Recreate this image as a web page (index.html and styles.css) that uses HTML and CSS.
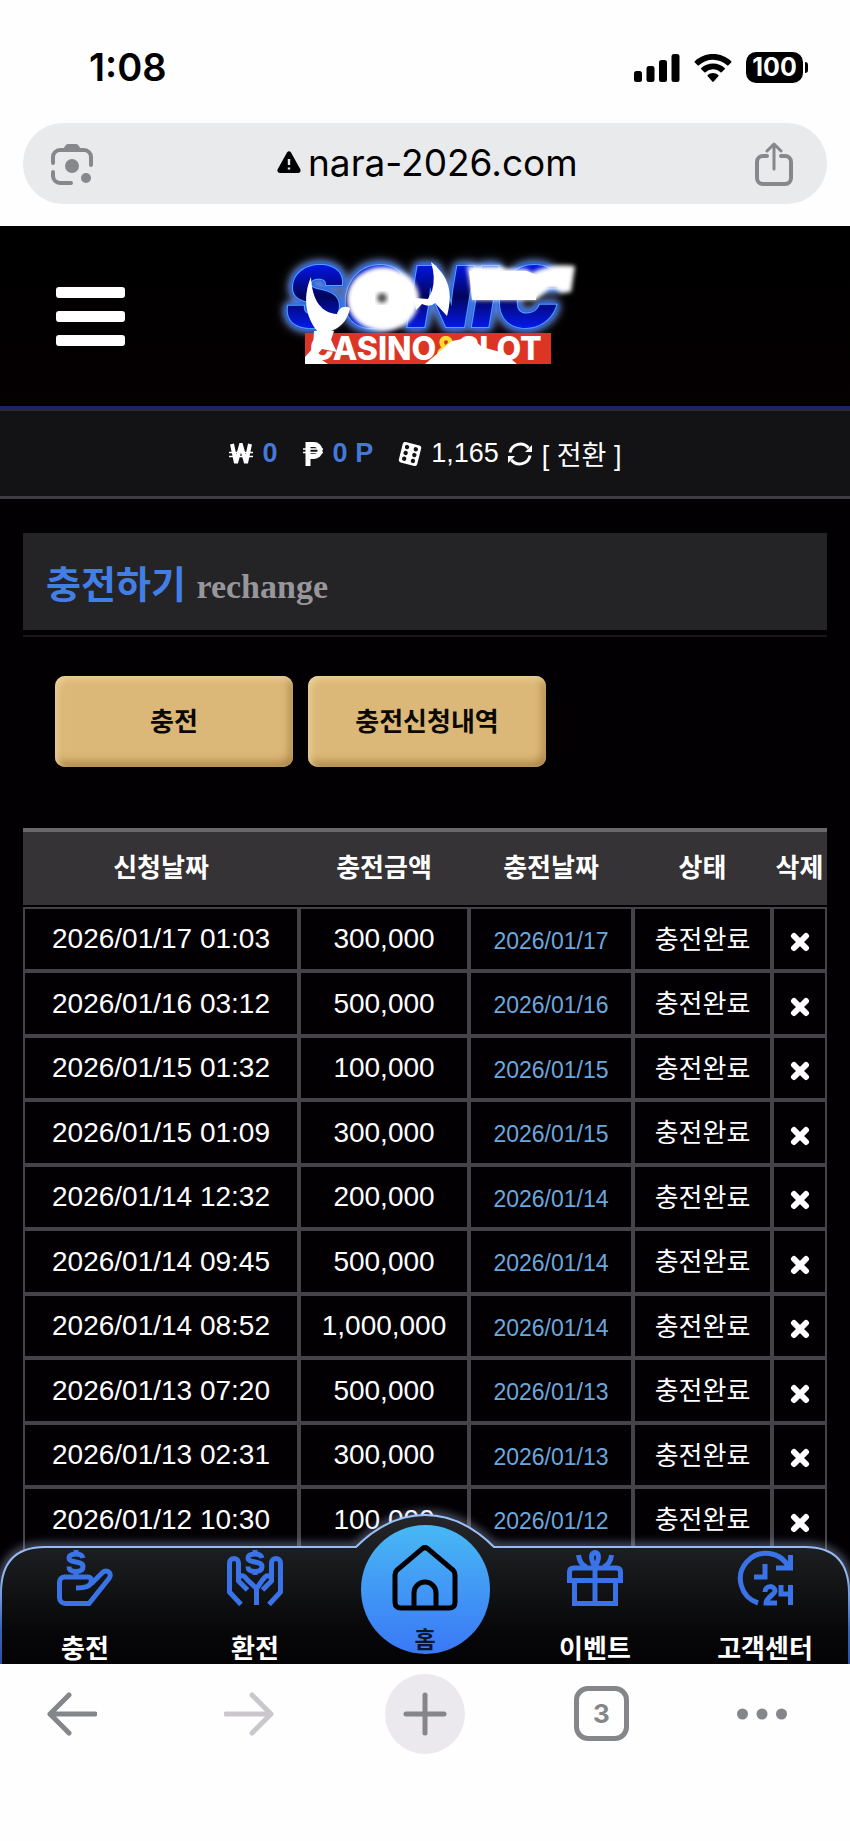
FILE: index.html
```html
<!DOCTYPE html>
<html lang="ko">

<head>
    <meta charset="UTF-8">
    <meta name="viewport" content="width=device-width, initial-scale=1.0">
    <title>충전하기</title>
    <link rel="stylesheet" href="styles.css">
</head>

<body>

    <!-- Phone status bar -->
    <div class="status-bar">
        <span class="clock">1:08</span>
        <div class="status-icons">
            <svg width="46" height="30" viewBox="0 0 46 30">
                <rect x="0" y="18" width="8" height="11" rx="2.5"/>
                <rect x="12.5" y="13" width="8" height="16" rx="2.5"/>
                <rect x="25" y="7" width="8" height="22" rx="2.5"/>
                <rect x="37.5" y="1" width="8" height="28" rx="2.5"/>
            </svg>
            <svg width="38" height="30" viewBox="0 0 38 30">
                <path d="M19 1C12 1 5.500 3.700.800 8.200a.9.9 0 0 0 0 1.300l2.800 2.800a.9.9 0 0 0 1.300 0A20.500 20.500 0 0 1 19 6.700c5.500 0 10.300 2.100 14.100 5.600a.9.9 0 0 0 1.300 0l2.800-2.800a.9.9 0 0 0 0-1.300C32.500 3.700 26 1 19 1z"/>
                <path d="M19 10.500c-4.500 0-8.600 1.700-11.700 4.500a.9.9 0 0 0 0 1.300l3 3a.9.9 0 0 0 1.200 0A11.300 11.300 0 0 1 19 16.300c2.900 0 5.500 1.100 7.500 3a.9.9 0 0 0 1.200 0l3-3a.9.9 0 0 0 0-1.300c-3.100-2.800-7.200-4.500-11.700-4.500z"/>
                <path d="M19 20c-2.100 0-4 .8-5.300 2a.9.9 0 0 0 0 1.300l4.600 5.200c.4.500 1 .5 1.400 0l4.600-5.200a.9.9 0 0 0 0-1.300A7.900 7.900 0 0 0 19 20z"/>
            </svg>
            <span class="battery">100</span>
        </div>
    </div>

    <!-- Address bar -->
    <div class="address-bar">
        <button class="bar-button" aria-label="Search by image">
            <svg width="44" height="44" viewBox="0 0 44 44" fill="none" stroke="#87888b" stroke-width="4" stroke-linecap="round">
                <path d="M3 21v-6a7 7 0 0 1 7-7h24a7 7 0 0 1 7 7v8M3 30v4a7 7 0 0 0 7 7h11"/>
                <path d="M13 8l2-4q1-2 3-2h8q2 0 3 2l2 4z" fill="#87888b" stroke="none"/>
                <circle cx="22" cy="24" r="7" fill="#87888b" stroke="none"/>
                <circle cx="36" cy="36" r="5" fill="#87888b" stroke="none"/>
            </svg>
        </button>
        <div class="address">
            <svg width="24" height="22" viewBox="0 0 24 22">
                <path d="M10 1.400q2-2.400 4 0l9.300 16.800q1.200 3.300-2 3.800H2.700q-3.200-.5-2-3.800z"/>
                <path d="M12 8v6M12 16.500v2" stroke="#e9eaec" stroke-width="2.400"/>
            </svg>
            <input class="address-input" type="text" value="nara-2026.com" aria-label="Address">
        </div>
        <button class="bar-button" aria-label="Share">
            <svg width="38" height="44" viewBox="0 0 38 44" fill="none" stroke="#87888b" stroke-width="4" stroke-linecap="round" stroke-linejoin="round">
                <path d="M12 14H8a6 6 0 0 0-6 6v16a6 6 0 0 0 6 6h22a6 6 0 0 0 6-6V20a6 6 0 0 0-6-6h-4"/>
                <path d="M19 27V3M12 9l7-7 7 7" stroke-width="3"/>
            </svg>
        </button>
    </div>

    <div class="site">

        <div class="header">
            <button class="menu" aria-label="메뉴">
                <span class="menu-line"></span>
                <span class="menu-line"></span>
                <span class="menu-line"></span>
            </button>
            <a class="logo" href="#" aria-label="Sonic Casino &amp; Slot">
                <svg width="340" height="140" viewBox="0 0 340 140">
                    <defs>
                        <filter id="soft" x="-20%" y="-20%" width="140%" height="140%">
                            <feGaussianBlur stdDeviation="2"/>
                        </filter>
                        <linearGradient id="letters" x1="0" y1="0" x2="0" y2="1">
                            <stop offset=".2" stop-color="#0314e0"/>
                            <stop offset=".5" stop-color="#02055c"/>
                            <stop offset=".8" stop-color="#0418e8"/>
                        </linearGradient>
                    </defs>
                    <text class="logo-name" x="26" y="86">SONIC</text>
                    <path d="M45 92h246v31H45z" fill="#dd3524"/>
                    <text class="logo-sub" x="50" y="119">CASINO<tspan fill="#ffdd35">&amp;</tspan>SLOT</text>
                    <!-- white shapes over the letters -->
                    <g fill="#fff">
                        <ellipse cx="123" cy="58" rx="36" ry="32" filter="url(#soft)"/>
                        <path d="M207 25h34l5 3h20l6 4q18-10 43-7l-4 26-10 1q-6-6-13-3l-12 10h-63z" filter="url(#soft)"/>
                        <path d="M209 30h58l12 5-3 24h-64z"/>
                        <path d="M51 36c-9 21-5 42 8 56 16 0 28-9 31-25-6-3-11 0-13 6-16-1-25-14-26-37z"/>
                        <path d="M171 21c14 11 24 26 16 54l-12-13q-5 5-13 1l-6 6-2-12 14 1 4-8q4-13-1-29z"/>
                        <path d="M54 90l20 0-3 9 6 12-15-3-6 7 12 8H45v-7l8-9z"/>
                        <path d="M165 123l27-23 10-2 11 0 9 8 22 6 13 11z"/>
                    </g>
                    <ellipse cx="122" cy="57" rx="5" ry="5" fill="#555" filter="url(#soft)"/>
                </svg>
            </a>
        </div>

        <!-- Balance and points -->
        <div class="wallet">
            <svg class="won" width="24" height="22" viewBox="0 0 24 22" fill="none" stroke="#fff">
                <path d="M3 1l4 19 5-18 5 18 4-19" stroke-width="4"/>
                <path d="M0 9.500h24M0 13.500h24" stroke-width="1.500"/>
            </svg>
            <b class="amount">0</b>
            <svg class="point" width="20" height="24" viewBox="0 0 20 24" fill="none" stroke="#fff">
                <path d="M5 24V2.500h6a5.500 5.500 0 0 1 0 12H5" stroke-width="5"/>
                <path d="M0 7h20M0 10.500h20" stroke-width="1.500"/>
            </svg>
            <b class="amount">0 P</b>
            <svg class="dice" width="24" height="24" viewBox="0 0 24 24">
                <g transform="rotate(14 12 12)">
                    <rect x="2.500" y="1.500" width="19" height="21" rx="2.500" fill="#fff"/>
                    <g fill="#131214">
                        <circle cx="7.500" cy="6" r="2.200"/><circle cx="7.500" cy="12" r="2.200"/><circle cx="7.500" cy="18" r="2.200"/>
                        <circle cx="16.500" cy="6" r="2.200"/><circle cx="16.500" cy="12" r="2.200"/><circle cx="16.500" cy="18" r="2.200"/>
                    </g>
                </g>
            </svg>
            <span class="chips">1,165</span>
            <svg class="refresh" width="24" height="24" viewBox="0 0 24 24" fill="none" stroke="#fff" stroke-width="3">
                <path d="M2 10.500A10.500 10.500 0 0 1 20.500 6M22 13.500A10.500 10.500 0 0 1 3.500 18"/>
                <path d="M24 3v7h-7zM0 21v-7h7z" fill="#fff" stroke="none"/>
            </svg>
            <button class="convert">[ 전환 ]</button>
        </div>

        <div class="content">
            <div class="title-wrap">
                <h1 class="title">충전하기 <small>rechange</small></h1>
            </div>

            <div class="tabs">
                <button class="tab">충전</button>
                <button class="tab">충전신청내역</button>
            </div>

            <table class="history">
                <colgroup>
                    <col>
                    <col class="col-amount">
                    <col class="col-date">
                    <col class="col-state">
                    <col class="col-delete">
                </colgroup>
                <thead>
                    <tr>
                        <th>신청날짜</th>
                        <th>충전금액</th>
                        <th>충전날짜</th>
                        <th>상태</th>
                        <th>삭제</th>
                    </tr>
                </thead>
                <tbody id="rows"></tbody>
            </table>
        </div>

        <!-- Bottom menu -->
        <div class="nav">
            <svg class="nav-shape" viewBox="0 0 850 158" preserveAspectRatio="none">
                <defs>
                    <linearGradient id="navFill" x1="0" y1="0" x2="0" y2="1">
                        <stop offset="0" stop-color="#25262a"/>
                        <stop offset=".35" stop-color="#17181a"/>
                        <stop offset=".75" stop-color="#060608"/>
                        <stop offset="1" stop-color="#020003"/>
                    </linearGradient>
                    <linearGradient id="navLine" x1="0" y1="0" x2="0" y2="1">
                        <stop offset="0" stop-color="#9cc4fa"/>
                        <stop offset=".4" stop-color="#8eb3ee"/>
                        <stop offset=".7" stop-color="#3a66b4"/>
                        <stop offset="1" stop-color="#2448a0"/>
                    </linearGradient>
                    <filter id="navGlow" x="-5%" y="-20%" width="110%" height="140%">
                        <feGaussianBlur stdDeviation="5"/>
                    </filter>
                </defs>
                <path d="M1 170V87Q1 41 45 41H356Q388 9 425 9T494 41H805Q849 41 849 87V170" fill="none" stroke="#b4c4ee" stroke-width="6" opacity=".6" filter="url(#navGlow)"/>
                <path d="M1 170V87Q1 41 45 41H356Q388 9 425 9T494 41H805Q849 41 849 87V170" fill="url(#navFill)" stroke="url(#navLine)" stroke-width="2"/>
            </svg>
            <a class="nav-item" href="#">
                <svg width="56" height="56" viewBox="0 0 56 56" class="nav-icon">
                    <path d="M20 27H7.500a5 5 0 0 0-5 5V47.500a6 6 0 0 0 6 6H32l20-25c4-5-2-10-6.500-6L34 34M7 27h24c5 0 4 8-1 9.500q-4 1.500-11 1.500"/>
                    <path d="M26 8q-1-4-7-4-7 0-7 4c0 5.500 14 2.500 14 8.500 0 4-3 5-7 5-5 0-7-1.500-7-5M19 0v4M19 21v5"/>
                </svg>
                <span class="nav-label">충전</span>
            </a>
            <a class="nav-item" href="#">
                <svg width="56" height="56" viewBox="0 0 56 56" class="nav-icon">
                    <path d="M14 54.500L2.500 42V13c0-6 9-6 9 0v18l9 9M12 27c4-3 6 0 8.500 3l9 8.500V55M42 54.500L53.500 42V13c0-6-9-6-9 0v18l-9 9M44 27c-4-3-6 0-8.500 3l-6 8.500"/>
                    <path d="M35 8q-1-4-7-4-7 0-7 4c0 5.500 14 2.500 14 8.500 0 4-3 5-7 5-5 0-7-1.500-7-5M28 0v4M28 21v4"/>
                </svg>
                <span class="nav-label">환전</span>
            </a>
            <a class="nav-item nav-home" href="#">
                <svg width="66" height="66" viewBox="0 0 66 66" class="home-icon">
                    <path d="M30 4q3-3 6 0l25 21q2 2 2 5v27q0 6-6 6H9q-6 0-6-6V30q0-3 2-5z"/>
                    <path d="M22 63V48a11 11 0 0 1 22 0v15"/>
                </svg>
                <span class="nav-label">홈</span>
            </a>
            <a class="nav-item" href="#">
                <svg width="56" height="56" viewBox="0 0 56 56" class="nav-icon">
                    <path d="M7.500 31v22.500h41V31M2.500 30.500V22q0-4 4-4h43q4 0 4 4v8.500zM28 18v36"/>
                    <path d="M28 17q-7-13 0-14.500 7 1.500 0 14.500M11.500 5q1 9 8 12M44.500 5q-1 9-8 12"/>
                </svg>
                <span class="nav-label">이벤트</span>
            </a>
            <a class="nav-item" href="#">
                <svg width="56" height="56" viewBox="0 0 56 56" class="nav-icon">
                    <path d="M21 53A25.500 25.500 0 1 1 52 18M53.500 5v13H39M28 14v13H17"/>
                    <path d="M28 42c0-7 10-7 10-1 0 3-9 7-9 12h11M44 35v9h9M53.500 35v20"/>
                </svg>
                <span class="nav-label">고객센터</span>
            </a>
        </div>
    </div>

    <!-- Browser toolbar -->
    <div class="toolbar">
        <button class="tool" aria-label="Back">
            <svg width="50" height="44" viewBox="0 0 50 44"><path d="M48 22H3M22 3L3 22l19 19"/></svg>
        </button>
        <button class="tool tool-off" aria-label="Forward">
            <svg width="50" height="44" viewBox="0 0 50 44"><path d="M2 22h45M28 3l19 19-19 19"/></svg>
        </button>
        <button class="tool tool-new" aria-label="New tab">
            <svg width="44" height="44" viewBox="0 0 44 44"><path d="M22 3v38M3 22h38"/></svg>
        </button>
        <button class="tool" aria-label="Tabs"><span class="tab-count">3</span></button>
        <button class="tool tool-more" aria-label="More">
            <svg width="50" height="12" viewBox="0 0 50 12"><path class="dots" d="M5.500 6h0M25 6h0M44.500 6h0"/></svg>
        </button>
    </div>

    <script>
        const history = [
            ["2026/01/17", "01:03", "300,000"],
            ["2026/01/16", "03:12", "500,000"],
            ["2026/01/15", "01:32", "100,000"],
            ["2026/01/15", "01:09", "300,000"],
            ["2026/01/14", "12:32", "200,000"],
            ["2026/01/14", "09:45", "500,000"],
            ["2026/01/14", "08:52", "1,000,000"],
            ["2026/01/13", "07:20", "500,000"],
            ["2026/01/13", "02:31", "300,000"],
            ["2026/01/12", "10:30", "100,000"]
        ];

        // Fill the table, one row per request
        document.getElementById("rows").innerHTML = history.map(function(item) {
            return `<tr>
                <td>${item[0]} ${item[1]}</td>
                <td>${item[2]}</td>
                <td class="done-date">${item[0]}</td>
                <td class="state">충전완료</td>
                <td><button class="delete" aria-label="삭제"><svg width="20" height="20" viewBox="0 0 20 20"><path d="M4 4l12 12M16 4L4 16"/></svg></button></td>
            </tr>`;
        }).join("");
    </script>

</body>

</html>
```
FILE: styles.css
```css
* {
    box-sizing: border-box;
}

body {
    display: flex;
    flex-direction: column;
    height: 100vh;
    margin: 0;
    background-color: #fefefe;
    font-family: "Liberation Sans", "Noto Sans CJK KR", sans-serif;
}

button {
    padding: 0;
    border: 0;
    background: none;
    color: inherit;
    font-family: inherit;
}

svg {
    display: block;
    flex-shrink: 0;
}

a {
    color: inherit;
    text-decoration: none;
}

/* Status bar */
.status-bar {
    display: flex;
    justify-content: space-between;
    align-items: center;
    padding: 45px 42px 33px 89px;
    font-family: Inter, sans-serif;
}

.clock {
    font-size: 38px;
    line-height: 45px;
    font-weight: 600;
}

.status-icons {
    display: flex;
    align-items: center;
    gap: 14px;
}

.battery {
    position: relative;
    width: 57px;
    margin-right: 5px;
    border-radius: 10px;
    background-color: #000;
    color: #fff;
    font-size: 25px;
    line-height: 31px;
    font-weight: 700;
    text-align: center;
}

/* battery tip */
.battery::after {
    content: "";
    position: absolute;
    top: 10px;
    right: -5px;
    width: 3px;
    height: 11px;
    border-radius: 0 3px 3px 0;
    background-color: #000;
}

/* Address bar */
.address-bar {
    display: flex;
    justify-content: space-between;
    align-items: center;
    margin: 0 23px 22px;
    padding: 0 34px 0 27px;
    height: 81px;
    border-radius: 40px;
    background-color: #e9eaec;
}

.address {
    display: flex;
    align-items: center;
    gap: 7px;
    padding: 0 0 3px 4px;
}

.address-input {
    width: 268px;
    padding: 0;
    border: 0;
    outline: 0;
    background: none;
    color: #000;
    font-family: Inter, sans-serif;
    font-size: 37px;
}

/* Site area between the browser bars */
.site {
    position: relative;
    flex: 1;
    min-height: 0;
    overflow: hidden;
    background-color: #020003;
    color: #fff;
}

.header {
    display: grid;
    grid-template-columns: 1fr auto 1fr;
    align-items: center;
    height: 183px;
    padding-bottom: 10px;
    border-bottom: 3px solid #1d2466;
    background: linear-gradient(#000, #050001);
}

.menu {
    display: flex;
    flex-direction: column;
    gap: 13px;
    width: 69px;
    margin: 10px 0 0 56px;
}

.logo {
    margin-left: 10px;
}

.menu-line {
    height: 11px;
    border-radius: 3px;
    background-color: #fff;
}

.logo-name {
    fill: url(#letters);
    stroke: #4fa2ff;
    stroke-width: 2px;
    paint-order: stroke;
    font-family: Inter, sans-serif;
    font-size: 84px;
    font-weight: 900;
    font-style: italic;
    filter: drop-shadow(0 0 2px #1c5ae0) drop-shadow(0 0 3px #1c5ae0) drop-shadow(0 0 4px #a9c2ff);
}

.logo-sub {
    fill: #fff;
    font-family: Inter, sans-serif;
    font-size: 32px;
    font-weight: 800;
}

/* Balance line */
.wallet {
    display: flex;
    justify-content: center;
    align-items: center;
    height: 90px;
    border-top: 2px solid #2b2a30;
    border-bottom: 3px solid #3f3d42;
    background-color: #131214;
    font-size: 27px;
}

.amount {
    margin: 0 25px 0 10px;
    color: #4579d8;
}

.chips {
    margin: 0 9px;
}

.convert {
    margin-left: 10px;
    font-size: 27px;
}

.content {
    padding: 34px 23px 0;
}

.title-wrap {
    padding-bottom: 5px;
    border-bottom: 2px solid #19181b;
}

.title {
    margin: 0;
    padding: 25px 23px 18px;
    background-color: #242326;
    color: #437ee6;
    font-size: 38px;
    line-height: 54px;
}

.title small {
    color: #98969b;
    font-family: "Liberation Serif", serif;
    font-size: 34px;
    line-height: 40px;
}

/* Buttons over the table */
.tabs {
    display: flex;
    gap: 15px;
    margin: 39px 32px 61px;
}

.tab {
    width: 238px;
    height: 91px;
    padding-bottom: 4px;
    border-radius: 10px;
    background-color: #dbb877;
    box-shadow: inset 3px 3px 6px #ecd19b, inset -3px -5px 8px #ab8448;
    color: #0c0905;
    font-size: 26px;
    font-weight: 700;
}

/* Request history */
.history {
    width: 100%;
    table-layout: fixed;
    border-collapse: separate;
    border-spacing: 0;
    font-size: 28px;
    text-align: center;
}

.col-amount { width: 170px; }
.col-date { width: 164px; }
.col-state { width: 139px; }
.col-delete { width: 55px; }

.history th {
    height: 79px;
    padding: 0 0 6px;
    border-top: 4px solid #6a686b;
    border-bottom: 2px solid #020003;
    background-color: #353336;
    font-size: 26px;
    white-space: nowrap;
}

.history td {
    height: 64px;
    padding: 0;
    border: 2px solid #454347;
    white-space: nowrap;
}

.history tr:nth-child(even) td {
    height: 65px;
}

.history .done-date {
    padding-top: 4px;
    color: #6ba8de;
    font-size: 23px;
}

.history .state {
    padding-bottom: 4px;
    font-size: 26px;
}

.delete {
    display: block;
    margin: 6px auto 0;
}

.delete path {
    fill: none;
    stroke: #fff;
    stroke-width: 6px;
    stroke-linecap: round;
}

/* Bottom menu */
.nav {
    position: absolute;
    left: 0;
    right: 0;
    bottom: 0;
    display: grid;
    grid-template-columns: repeat(5, 1fr);
    align-items: end;
    justify-items: center;
}

.nav-shape {
    position: absolute;
    left: 0;
    bottom: 0;
    width: 100%;
    height: 158px;
    overflow: visible;
}

.nav-item {
    position: relative;
    display: flex;
    flex-direction: column;
    align-items: center;
    gap: 28px;
}

.nav-icon {
    fill: none;
    stroke: #3a72e8;
    stroke-width: 5px;
}

.nav-label {
    font-size: 26px;
    line-height: 30px;
    font-weight: 700;
}

.nav-home {
    width: 129px;
    height: 129px;
    margin-bottom: 10px;
    padding-top: 20px;
    gap: 16px;
    border-radius: 50%;
    background: linear-gradient(#48b8f4, #3a78f6);
    color: #0a1630;
}

.nav-home .nav-label {
    font-size: 23px;
    line-height: 27px;
}

.home-icon {
    fill: none;
    stroke: #000;
    stroke-width: 5px;
}

/* Browser toolbar */
.toolbar {
    display: flex;
    justify-content: space-between;
    align-items: center;
    height: 177px;
    padding: 0 64px 78px 32px;
}

.tool {
    display: flex;
    justify-content: center;
    align-items: center;
    width: 80px;
    height: 80px;
}

.tool svg {
    fill: none;
    stroke: #85868a;
    stroke-width: 5px;
    stroke-linecap: round;
    stroke-linejoin: round;
}

.tool-off svg {
    stroke: #c9c7cb;
}

.tool-new {
    border-radius: 50%;
    background-color: #ece9ee;
}

.tab-count {
    width: 55px;
    height: 55px;
    border: 5px solid #85868a;
    border-radius: 14px;
    color: #85868a;
    font-family: Inter, sans-serif;
    font-size: 26px;
    line-height: 45px;
    font-weight: 700;
}

.tool-more {
    width: 48px;
}

.tool-more .dots {
    stroke-width: 11px;
}
```
